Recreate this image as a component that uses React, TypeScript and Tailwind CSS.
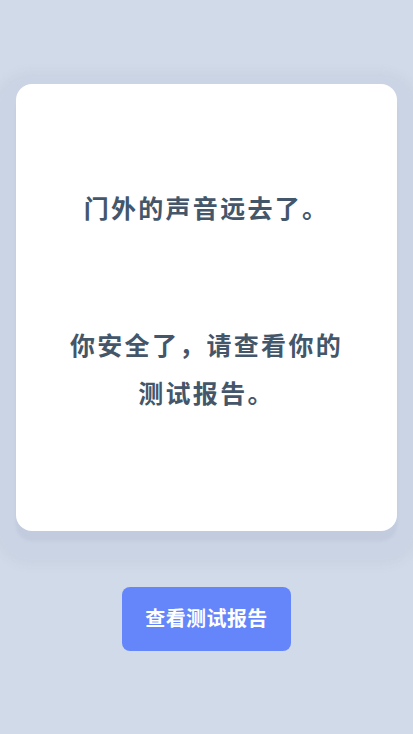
export default function App() {
  return (
    <div className="flex min-h-[734px] flex-col items-center justify-center bg-[#d1dae8] font-['Inter','Noto_Sans_CJK_SC',sans-serif]">
      {/* Message card */}
      <div className="w-[381px] rounded-2xl bg-white px-6 pb-[113px] pt-[101px] text-center text-[25px] font-bold leading-[48px] tracking-[2.3px] text-[#44566a] shadow-[0_10px_3px_rgba(120,140,175,0.10),0_11px_8px_24px_rgba(140,158,190,0.09)]">
        <p>门外的声音远去了。</p>
        <p className="mx-auto mt-[89px] max-w-[290px]">你安全了，请查看你的测试报告。</p>
      </div>

      <button className="mt-14 h-16 w-[169px] rounded-lg bg-[#6586fb] text-[20px] font-bold tracking-[0.02em] text-white">
        查看测试报告
      </button>
    </div>
  );
}
